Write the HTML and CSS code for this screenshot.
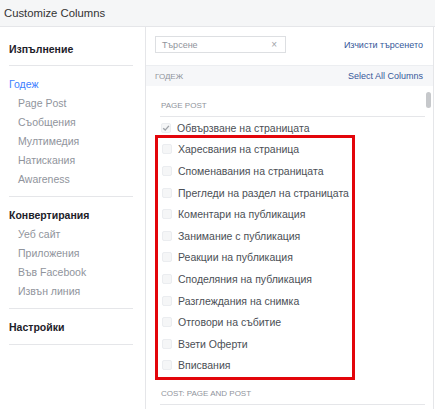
FILE: index.html
```html
<!DOCTYPE html>
<html lang="bg">
<head>
  <meta charset="UTF-8">
  <title>Customize Columns</title>
  <meta name="viewport" content="width=device-width, initial-scale=1.0">
  <link rel="stylesheet" href="styles.css">
</head>
<body>
  <div class="dialog">
    <div class="dialog-header">Customize Columns</div>

    <div class="dialog-body">
      <nav class="sidebar">
        <div class="nav-section first">
          <div class="nav-title">Изпълнение</div>
        </div>
        <div class="nav-section">
          <div class="nav-title active">Годеж</div>
          <ul class="nav-list">
            <li>Page Post</li>
            <li>Съобщения</li>
            <li>Мултимедия</li>
            <li>Натискания</li>
            <li>Awareness</li>
          </ul>
        </div>
        <div class="nav-section">
          <div class="nav-title">Конвертирания</div>
          <ul class="nav-list">
            <li>Уеб сайт</li>
            <li>Приложения</li>
            <li>Във Facebook</li>
            <li>Извън линия</li>
          </ul>
        </div>
        <div class="nav-section">
          <div class="nav-title">Настройки</div>
        </div>
      </nav>

      <div class="panel">
        <div class="search-row">
          <div class="search-box">
            <span class="search-placeholder">Търсене</span>
            <span class="search-clear">×</span>
          </div>
          <a class="link">Изчисти търсенето</a>
        </div>

        <div class="group-bar">
          <span class="group-name">Годеж</span>
          <a class="link">Select All Columns</a>
        </div>

        <div class="column-list">
          <div class="scroll-thumb"></div>

          <div class="list-heading">Page Post</div>
          <div class="column-row">
            <span class="checkbox checked">
              <svg viewBox="0 0 10 10" width="10" height="10"><path d="M2.2 5.2 L4.2 7.1 L7.9 2.9" fill="none" stroke="#9ea2a8" stroke-width="1.4"/></svg>
            </span>
            <span>Обвързване на страницата</span>
          </div>

          <div class="highlight">
            <div class="column-row"><span class="checkbox"></span><span>Харесвания на страница</span></div>
            <div class="column-row"><span class="checkbox"></span><span>Споменавания на страницата</span></div>
            <div class="column-row"><span class="checkbox"></span><span>Прегледи на раздел на страницата</span></div>
            <div class="column-row"><span class="checkbox"></span><span>Коментари на публикация</span></div>
            <div class="column-row"><span class="checkbox"></span><span>Занимание с публикация</span></div>
            <div class="column-row"><span class="checkbox"></span><span>Реакции на публикация</span></div>
            <div class="column-row"><span class="checkbox"></span><span>Споделяния на публикация</span></div>
            <div class="column-row"><span class="checkbox"></span><span>Разглеждания на снимка</span></div>
            <div class="column-row"><span class="checkbox"></span><span>Отговори на събитие</span></div>
            <div class="column-row"><span class="checkbox"></span><span>Взети Оферти</span></div>
            <div class="column-row"><span class="checkbox"></span><span>Вписвания</span></div>
          </div>

          <div class="list-heading">Cost: Page and Post</div>
        </div>
      </div>
    </div>
  </div>
</body>
</html>
```

FILE: styles.css
```css
* { box-sizing: border-box; }
body {
  margin: 0;
  font-family: 'Liberation Sans', Arial, sans-serif;
  background: #fff;
  color: #1d2129;
}
.dialog {
  display: flex; flex-direction: column;
  height: 100vh; overflow: hidden;
}
.dialog-header {
  height: 27px; padding: 0 4px;
  display: flex; align-items: center;
  font-size: 11.3px; color: #333;
  background: #f5f6f7;
  border-bottom: 1px solid #e5e6e9;
}
.dialog-body {
  flex: 1; display: flex;
}

/* left navigation */
.sidebar {
  width: 146px;
  padding: 4px 12px 0 9px;
  border-right: 1px solid #e5e6e9;
}
.nav-section {
  padding: 8px 0 7px;
  border-bottom: 1px solid #e5e6e9;
}
.nav-section.first { padding-bottom: 6px; }
.nav-title {
  font-size: 10.5px; font-weight: bold; line-height: 20px;
  color: #1d2129;
}
.nav-title.active { font-weight: normal; color: #4080ff; }
.nav-list {
  list-style: none; margin: 0; padding: 0 0 0 9px;
}
.nav-list li {
  font-size: 10.5px; line-height: 19px; color: #90949c;
}

/* right panel */
.panel {
  width: 288px;
  display: flex; flex-direction: column;
  border-right: 1px solid #e5e6e9;
}
.search-row {
  display: flex; align-items: center; justify-content: space-between;
  padding: 9px 10px 12px 9px;
  border-bottom: 1px solid #eceef1;
}
.search-box {
  width: 131px; height: 17px;
  display: flex; align-items: center; justify-content: space-between;
  padding: 0 8px 0 6px;
  border: 1px solid #dddfe2;
}
.search-placeholder { font-size: 9px; color: #90949c; }
.search-clear { font-size: 10px; color: #a0a3a8; }
.link {
  font-size: 9px; color: #365899; cursor: pointer;
}
.group-bar {
  height: 20px;
  display: flex; align-items: center; justify-content: space-between;
  padding: 0 10px 0 9px;
  background: #f6f7f9;
}
.group-name {
  font-size: 8px; text-transform: uppercase; color: #90949c;
}
.column-list {
  position: relative; flex: 1;
  padding: 0 8px 0 14px;
}
.scroll-thumb {
  position: absolute; top: 6px; right: 2px;
  width: 5px; height: 16px;
  border-radius: 3px; background: #c6c8cb;
}
.list-heading {
  padding: 14px 0 4px 1px;
  font-size: 8px; line-height: 12px;
  text-transform: uppercase; color: #90949c;
  border-bottom: 1px solid #e5e6e9;
}
.highlight + .list-heading { padding-top: 12px; }
.column-row {
  height: 21.6px; padding-left: 1px;
  display: flex; align-items: center; gap: 6px;
  font-size: 10.5px; color: #4b4f56;
}
.checkbox {
  width: 10px; height: 10px; flex: none;
  display: flex;
  border: 1px solid #ebedf0; border-radius: 2px;
  background: #f5f6f7;
}
.checkbox svg { margin: -1px; }
.highlight {
  width: 200px;
  margin: -4px 0 -4px -5px;
  padding: 1px 0 1px 3px;
  border: 3px solid #e3050b;
}
```
